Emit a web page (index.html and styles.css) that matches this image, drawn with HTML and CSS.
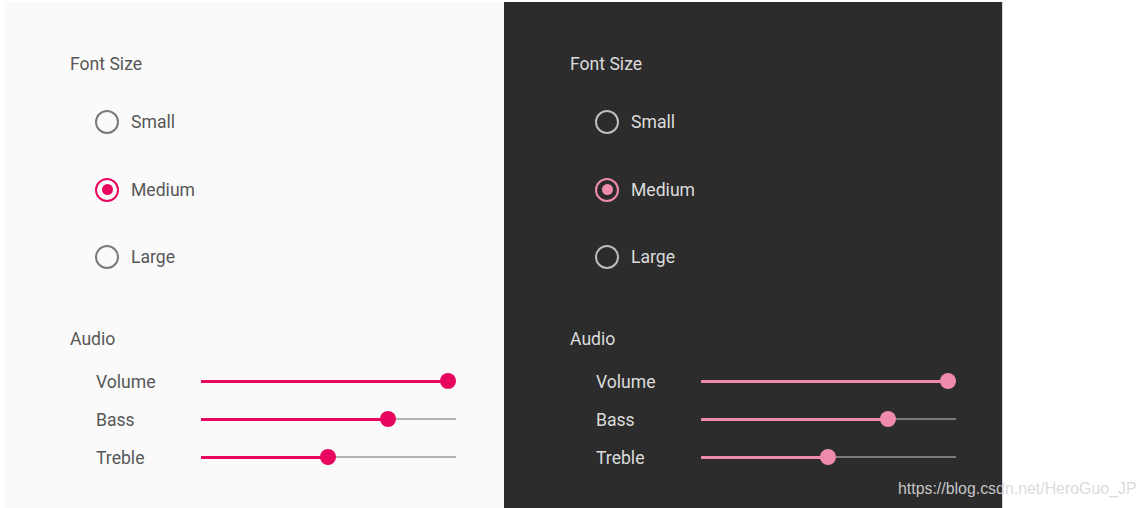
FILE: index.html
```html
<!DOCTYPE html>
<html>
<head>
<meta charset="utf-8">
<link rel="stylesheet" href="styles.css">
</head>
<body>
<div class="stage">
  <section class="panel light">
    <div class="heading first">Font Size</div>
    <div class="radios">
      <div class="radio"><span class="circle"></span><span class="label">Small</span></div>
      <div class="radio checked"><span class="circle"><span class="dot"></span></span><span class="label">Medium</span></div>
      <div class="radio"><span class="circle"></span><span class="label">Large</span></div>
    </div>
    <div class="heading audio">Audio</div>
    <div class="sliders">
      <div class="slider"><span class="label">Volume</span><div class="track"><div class="fill" style="width:96.9%"></div><div class="thumb" style="left:96.9%"></div></div></div>
      <div class="slider"><span class="label">Bass</span><div class="track"><div class="fill" style="width:73.3%"></div><div class="thumb" style="left:73.3%"></div></div></div>
      <div class="slider"><span class="label">Treble</span><div class="track"><div class="fill" style="width:49.8%"></div><div class="thumb" style="left:49.8%"></div></div></div>
    </div>
  </section>
  <section class="panel dark">
    <div class="heading first">Font Size</div>
    <div class="radios">
      <div class="radio"><span class="circle"></span><span class="label">Small</span></div>
      <div class="radio checked"><span class="circle"><span class="dot"></span></span><span class="label">Medium</span></div>
      <div class="radio"><span class="circle"></span><span class="label">Large</span></div>
    </div>
    <div class="heading audio">Audio</div>
    <div class="sliders">
      <div class="slider"><span class="label">Volume</span><div class="track"><div class="fill" style="width:96.9%"></div><div class="thumb" style="left:96.9%"></div></div></div>
      <div class="slider"><span class="label">Bass</span><div class="track"><div class="fill" style="width:73.3%"></div><div class="thumb" style="left:73.3%"></div></div></div>
      <div class="slider"><span class="label">Treble</span><div class="track"><div class="fill" style="width:49.8%"></div><div class="thumb" style="left:49.8%"></div></div></div>
    </div>
  </section>
</div>
<div class="watermark">https://blog.csdn.net/HeroGuo_JP</div>
</body>
</html>
```

FILE: styles.css
```css
html, body {
  margin: 0;
  padding: 0;
  background: #ffffff;
  width: 1144px;
  height: 508px;
  overflow: hidden;
}

body {
  position: relative;
  font-family: Roboto, "Noto Sans", sans-serif;
}

.stage {
  display: flex;
  padding: 2px 0 0 4px;
}

.panel {
  width: 500px;
  height: 506px;
  box-sizing: border-box;
  padding-left: 66px;
  display: flex;
  flex-direction: column;
}

.panel.light {
  background: #fafafa;
  color: #575757;
}

.panel.dark {
  width: 499px;
  background: #2c2c2c;
  color: #dcdcdc;
  border-right: 1px solid #d8d8d8;
}

.heading {
  height: 22px;
  line-height: 22px;
  font-size: 17.6px;
}

.heading.first {
  margin-top: 51px;
}

.heading.audio {
  margin-top: 37px;
}

.radios {
  margin-top: 13px;
  padding-left: 25px;
  display: flex;
  flex-direction: column;
}

.radio {
  height: 67.7px;
  display: flex;
  align-items: center;
}

.circle {
  width: 24px;
  height: 24px;
  box-sizing: border-box;
  border-radius: 50%;
  border: 2px solid #7a7a7a;
  display: flex;
  align-items: center;
  justify-content: center;
}

.dark .circle {
  border-color: #bdbdbd;
}

.dot {
  width: 11px;
  height: 11px;
  border-radius: 50%;
  background: #e8075f;
}

.light .checked .circle {
  border-color: #e8075f;
}

.dark .checked .circle {
  border-color: #f08bb0;
}

.dark .dot {
  background: #f08bb0;
}

.radio .label {
  margin-left: 12px;
  font-size: 17.6px;
}

.sliders {
  margin-top: 12px;
  padding-left: 26px;
  display: flex;
  flex-direction: column;
}

.slider {
  height: 38px;
  display: flex;
  align-items: center;
}

.slider .label {
  width: 105px;
  font-size: 17.6px;
  padding-top: 2px;
}

.track {
  position: relative;
  width: 255px;
  height: 2px;
  background: #b4b4b4;
}

.dark .track {
  background: #7a7a7a;
}

.fill {
  height: 3px;
  margin-top: -0.5px;
  background: #e8075f;
}

.dark .fill {
  background: #f08bb0;
}

.thumb {
  position: absolute;
  top: 1px;
  width: 16px;
  height: 16px;
  margin: -8px 0 0 -8px;
  border-radius: 50%;
  background: #e8075f;
}

.dark .thumb {
  background: #f08bb0;
}

.watermark {
  position: absolute;
  left: 898px;
  top: 480px;
  font-family: "Liberation Sans", Arial, sans-serif;
  font-size: 15.9px;
  color: rgba(215, 215, 215, 0.92);
  white-space: nowrap;
}
```
